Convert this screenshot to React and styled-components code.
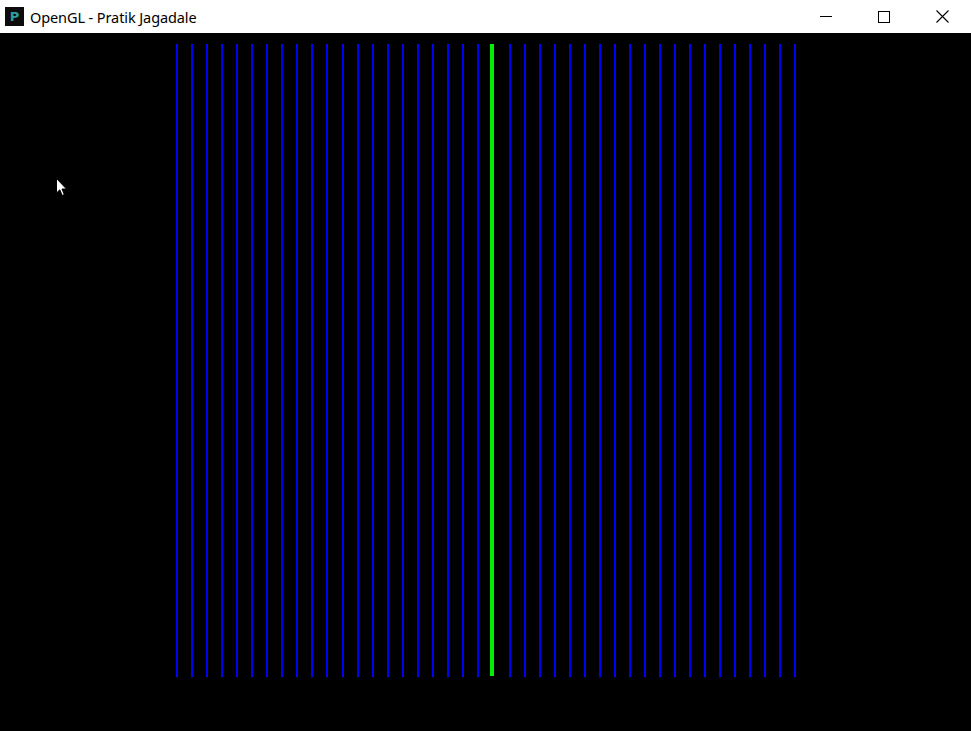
import React from 'react'
import styled, { createGlobalStyle } from 'styled-components'

const GlobalStyle = createGlobalStyle`
	html, body {
		margin: 0;
		padding: 0;
		background: #000;
	}
	body {
		font-family: 'Noto Sans', 'Open Sans', sans-serif;
	}
`

const Window = styled('div')`
	width: 971px;
	height: 731px;
	display: flex;
	flex-direction: column;
	position: relative;
	overflow: hidden;
`

const TitleBar = styled('div')`
	height: 33px;
	background: #fff;
	display: flex;
	align-items: center;
	flex-shrink: 0;
`

const AppIcon = styled('div')`
	width: 19px;
	height: 19px;
	margin-left: 5px;
	margin-right: 6px;
	background: #0c0c0c;
	display: flex;
	align-items: center;
	justify-content: center;
	font-family: 'DejaVu Sans', sans-serif;
	font-weight: bold;
	font-size: 13px;
	line-height: 1;
	color: #2e9e9a;
`

const Title = styled('span')`
	font-size: 14.5px;
	color: #000;
	flex: 1;
	letter-spacing: -0.1px;
`

const Controls = styled('div')`
	display: flex;
	height: 100%;
`

const ControlButton = styled('div')`
	width: 58px;
	height: 100%;
	display: flex;
	align-items: center;
	justify-content: center;
`

const Canvas = styled('div')`
	flex: 1;
	background: #000;
	position: relative;
`

const Cursor = styled('svg')`
	position: absolute;
	left: 56px;
	top: 145px;
`

const leftLines = [177, 192, 207, 222, 237, 252, 267, 282, 297, 312, 327, 343, 358, 373, 388, 403, 418, 433, 448, 463, 478]
const rightLines = [510, 525, 540, 555, 570, 585, 600, 615, 630, 645, 660, 675, 690, 705, 720, 735, 750, 765, 780, 795]

const Grid = () => (
	<svg width="971" height="698" style={{ display: 'block' }}>
		{[...leftLines, ...rightLines].map(x => (
			<rect key={x} x={x - 1} y={11} width={2} height={633} fill="#0000f2" />
		))}
		<rect x={490} y={11} width={4} height={632} fill="#00f000" />
	</svg>
)

const App = () => {
	return (
		<>
			<GlobalStyle />
			<Window>
				<TitleBar>
					<AppIcon>P</AppIcon>
					<Title>OpenGL - Pratik Jagadale</Title>
					<Controls>
						<ControlButton>
							<svg width="12" height="12" viewBox="0 0 12 12">
								<rect x="0" y="5" width="12" height="1" fill="#000" />
							</svg>
						</ControlButton>
						<ControlButton>
							<svg width="12" height="12" viewBox="0 0 12 12">
								<rect x="0.5" y="0.5" width="11" height="11" fill="none" stroke="#000" strokeWidth="1" />
							</svg>
						</ControlButton>
						<ControlButton>
							<svg width="13" height="13" viewBox="0 0 13 13">
								<path d="M0.5 0.5 L12.5 12.5 M12.5 0.5 L0.5 12.5" stroke="#000" strokeWidth="1.1" />
							</svg>
						</ControlButton>
					</Controls>
				</TitleBar>
				<Canvas>
					<Grid />
					<Cursor width="11" height="19" viewBox="0 0 11 19">
						<path
							d="M0.5 0.5 L0.5 15 L3.8 11.8 L6.2 17.5 L8.3 16.6 L6 11 L10.5 11 Z"
							fill="#fff"
							stroke="#000"
							strokeWidth="1"
						/>
					</Cursor>
				</Canvas>
			</Window>
		</>
	)
}

export default App
